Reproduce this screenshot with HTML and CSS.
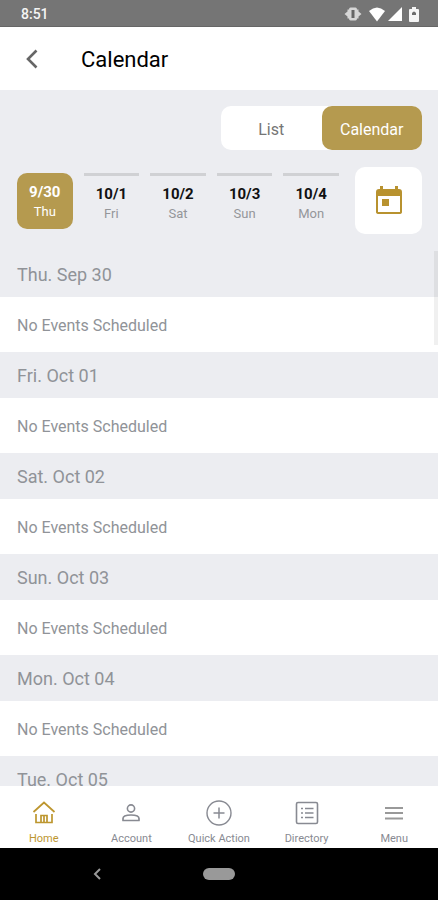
FILE: index.html
```html
<!DOCTYPE html>
<html lang="en">
<head>
<meta charset="utf-8">
<meta name="viewport" content="width=device-width, initial-scale=1">
<title>Calendar</title>
<link rel="stylesheet" href="styles.css">
</head>
<body>
<div class="status">
  <span class="clock">8:51</span>
  <div class="status-icons">
    <svg class="vibrate" width="18" height="14" viewBox="0 0 18 14"><path d="M6.500.5h5Q13 .5 13 2.500h1.500V4.500L17.500 7l-3 2.500v2H13q0 2-1.500 2h-5q-1.500 0-1.500-2H3.500v-2L.5 7l3-2.500v-2H5Q5 .5 6.500.5z" fill="#d6d6d6"/><path d="M7.500 3h3v8h-3z" fill="#666"/></svg>
    <svg width="18" height="15" viewBox="0 0 18 15"><path d="M1 4Q9-3 17 4L9 14.500z" fill="#fff"/></svg>
    <svg width="14" height="14" viewBox="0 0 14 14"><path d="M14 0v14H0z" fill="#fff"/></svg>
    <svg class="battery" width="10" height="15" viewBox="0 0 10 15"><path d="M3 0h4v2h2q1 0 1 1v11q0 1-1 1H1q-1 0-1-1V3q0-1 1-1h2z" fill="#f4f4f4"/><path d="M3 8V6q2-3 4 0v2z" fill="#6b6b6b"/></svg>
  </div>
</div>
<header class="header">
  <button class="back" aria-label="Back"><svg width="12" height="20" viewBox="0 0 12 20"><path d="M10.500 1.500 2 10l8.500 8.500" fill="none" stroke="#666" stroke-width="2.600"/></svg></button>
  <h1>Calendar</h1>
</header>
<section class="controls">
  <div class="switch">
    <button>List</button>
    <button class="on">Calendar</button>
  </div>
  <div class="picker">
    <div class="days">
      <button class="day on"><b>9/30</b><span>Thu</span></button>
      <button class="day"><b>10/1</b><span>Fri</span></button>
      <button class="day"><b>10/2</b><span>Sat</span></button>
      <button class="day"><b>10/3</b><span>Sun</span></button>
      <button class="day"><b>10/4</b><span>Mon</span></button>
    </div>
    <button class="pick" aria-label="Pick a date"><svg width="26" height="30" viewBox="0 0 26 30"><path fill="#b8922f" fill-rule="evenodd" d="M4 0h3v3h12V0h3v3h1q3 0 3 3v20q0 2-3 2H3q-3 0-3-2V6q0-3 3-3h1zM2 10v16h22V10z"/><path fill="#b8922f" d="M6 13h7v7H6z"/></svg></button>
  </div>
</section>
<main class="agenda">
  <h2>Thu. Sep 30</h2><p>No Events Scheduled</p>
  <h2>Fri. Oct 01</h2><p>No Events Scheduled</p>
  <h2>Sat. Oct 02</h2><p>No Events Scheduled</p>
  <h2>Sun. Oct 03</h2><p>No Events Scheduled</p>
  <h2>Mon. Oct 04</h2><p>No Events Scheduled</p>
  <h2>Tue. Oct 05</h2>
  <div class="thumb"></div>
</main>
<nav class="tabs">
  <a class="on" href="#"><svg width="26" height="26" viewBox="0 0 26 26"><path d="M2.500 12 13 2.500 23.500 12M5 14v8.500h16V14M10 22v-6.500h6V22M13 16v6" fill="none" stroke="currentColor" stroke-width="1.700"/></svg>Home</a>
  <a href="#"><svg width="26" height="26" viewBox="0 0 26 26"><circle cx="13" cy="8.500" r="3.600" fill="none" stroke="currentColor" stroke-width="1.600"/><path d="M5 20.500v-2q0-3.500 8-3.500t8 3.500v2z" fill="none" stroke="currentColor" stroke-width="1.700" stroke-linejoin="round"/></svg>Account</a>
  <a href="#"><svg width="26" height="26" viewBox="0 0 26 26"><circle cx="13" cy="13" r="12" fill="none" stroke="currentColor" stroke-width="1.400"/><path d="M13 7.500v11M7.500 13h11" stroke="currentColor" stroke-width="1.500"/></svg>Quick Action</a>
  <a href="#"><svg width="26" height="26" viewBox="0 0 26 26"><rect x="2.500" y="2.500" width="21" height="21" rx="1.500" fill="none" stroke="currentColor" stroke-width="1.600"/><path d="M7 8.500h2M7 13h2M7 17.500h2M11 8.500h8.500M11 13h8.500M11 17.500h8.500" stroke="currentColor" stroke-width="1.600"/></svg>Directory</a>
  <a href="#"><svg width="26" height="26" viewBox="0 0 26 26"><path d="M4 8h18M4 13h18M4 18.500h18" stroke="#999" stroke-width="2"/></svg>Menu</a>
</nav>
<div class="system">
  <button class="sys-back" aria-label="System back"><svg width="8" height="12" viewBox="0 0 8 12"><path d="M7 1 2 6l5 5" fill="none" stroke="#999" stroke-width="2"/></svg></button>
  <button class="pill" aria-label="System home"></button>
</div>
</body>
</html>
```
FILE: styles.css
```css
* { box-sizing: border-box; }

body {
  margin: 0;
  height: 100vh;
  display: flex;
  flex-direction: column;
  background: #fff;
  color: #909398;
  font-family: Roboto, "Liberation Sans", sans-serif;
  overflow: hidden;
}

button {
  margin: 0;
  padding: 0;
  border: 0;
  background: none;
  color: inherit;
  font: inherit;
}

svg { display: block; }

h1, h2, p { margin: 0; font-weight: 400; }

.status {
  flex: none;
  height: 27px;
  padding: 2px 19px 0 21px;
  display: flex;
  align-items: center;
  justify-content: space-between;
  background: #757575;
  border-bottom: 1px solid #666;
}

.clock { color: #f4f4f4; font-size: 14px; font-weight: 500; line-height: 24px; }

.status-icons { display: flex; align-items: center; gap: 2px; }
.vibrate { margin-right: 4px; }
.battery { margin-left: 5px; }

.header {
  flex: none;
  height: 63px;
  padding-left: 26px;
  display: flex;
  align-items: center;
  gap: 43px;
}

.header h1 { color: #000; font-size: 22px; line-height: 32px; padding-top: 3px; }

.controls {
  flex: none;
  padding: 16px 16px 17px 17px;
  display: flex;
  flex-direction: column;
  gap: 17px;
  background: #ecedf1;
}

.switch {
  width: 201px;
  height: 44px;
  align-self: flex-end;
  display: flex;
  border-radius: 10px;
  background: #fff;
  color: #757575;
  font-size: 16px;
}

.switch button { flex: 1; padding-top: 2px; border-radius: 10px; }
.switch .on { background: #b59a4f; color: #fff; }

.picker { display: flex; gap: 16px; }

.days { flex: 1; display: flex; gap: 11px; padding-top: 6px; }

.day {
  flex: 1;
  height: 56px;
  padding-top: 2px;
  display: flex;
  flex-direction: column;
  align-items: center;
  justify-content: center;
  border-top: 3px solid #d0d1d4;
  color: #94969a;
  font-size: 13px;
  line-height: 19px;
}

.day b { color: #111; font-size: 15px; font-weight: 700; }

.day.on { border: 0; border-radius: 10px; background: #b59a4f; color: #fff; }
.day.on b { color: #fff; }

.pick {
  width: 67px;
  height: 67px;
  display: grid;
  place-items: center;
  border-radius: 10px;
  background: #fff;
}

.agenda {
  flex: 1;
  min-height: 0;
  position: relative;
  overflow: hidden;
}

.agenda h2, .agenda p { padding-left: 17px; }

.agenda h2 {
  height: 46px;
  background: #ecedf1;
  font-size: 18px;
  line-height: 48px;
}

.agenda p {
  height: 55px;
  font-size: 16px;
  line-height: 58px;
}

.thumb {
  position: absolute;
  top: 0;
  right: 0;
  width: 4px;
  height: 94px;
  background: rgba(0, 0, 0, 0.06);
}

.tabs {
  flex: none;
  height: 62px;
  padding-top: 14px;
  display: flex;
  background: #fff;
}

.tabs a {
  flex: 1;
  display: flex;
  flex-direction: column;
  align-items: center;
  gap: 6px;
  color: #888a92;
  font-size: 11px;
  line-height: 14px;
  text-decoration: none;
}

.tabs .on { color: #bd962f; }

.system {
  flex: none;
  height: 52px;
  display: grid;
  grid-template-columns: 1fr 32px 1fr;
  align-items: center;
  background: #000;
}

.sys-back { justify-self: center; margin-right: 10px; }

.pill { height: 12px; border-radius: 6px; background: #999; }
```
